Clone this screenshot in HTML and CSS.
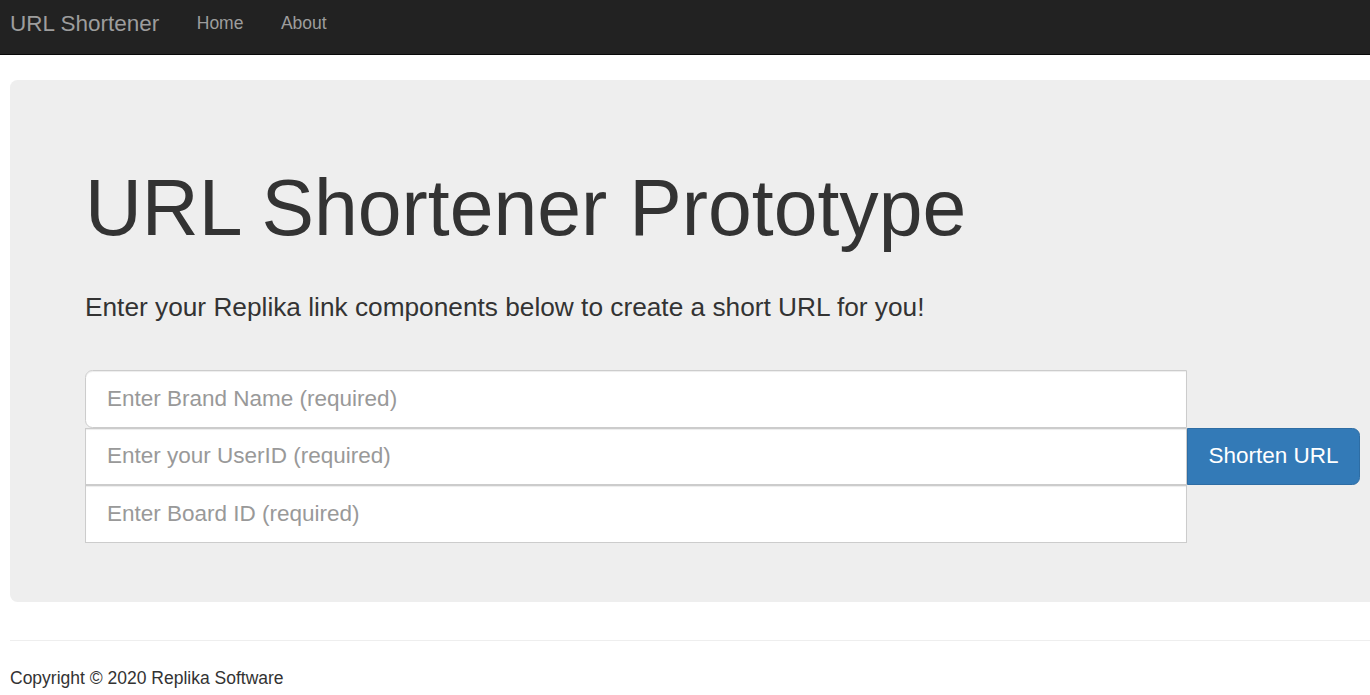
FILE: index.html
```html
<!DOCTYPE html>
<html lang="en">
<head>
<meta charset="utf-8">
<title>URL Shortener</title>
<link rel="stylesheet" href="styles.css">
</head>
<body>
<nav class="navbar">
  <a class="brand" href="#">URL Shortener</a>
  <ul class="nav">
    <li><a href="#">Home</a></li>
    <li><a href="#">About</a></li>
  </ul>
</nav>
<main class="page">
  <section class="jumbotron">
    <h1 class="title">URL Shortener Prototype</h1>
    <p class="lead">Enter your Replika link components below to create a short URL for you!</p>
    <form class="shorten-form">
      <div class="fields">
        <input class="field field-first" type="text" placeholder="Enter Brand Name (required)">
        <input class="field" type="text" placeholder="Enter your UserID (required)">
        <input class="field" type="text" placeholder="Enter Board ID (required)">
      </div>
      <button class="btn-primary" type="button">Shorten URL</button>
    </form>
  </section>
  <hr class="divider">
  <footer class="footer">
    <p class="copyright">Copyright © 2020 Replika Software</p>
  </footer>
</main>
</body>
</html>
```

FILE: styles.css
```css
html, body {
  margin: 0;
  padding: 0;
  overflow: hidden;
  background: #fff;
}

body {
  font-family: "Liberation Sans", Arial, Helvetica, sans-serif;
  font-size: 17.5px;
  line-height: 25px;
  color: #333;
}

.navbar {
  display: flex;
  align-items: flex-start;
  height: 54px;
  box-sizing: content-box;
  background: #222;
  border-bottom: 1px solid #080808;
  padding: 0 0 0 10px;
}

.brand {
  display: block;
  padding-top: 11px;
  padding-right: 18.75px;
  font-size: 22.5px;
  line-height: 25px;
  color: #9d9d9d;
  text-decoration: none;
}

.nav {
  display: flex;
  margin: 0;
  padding: 0;
  list-style: none;
}

.nav a {
  display: block;
  padding: 10.5px 18.75px 0;
  font-size: 17.5px;
  line-height: 25px;
  color: #9d9d9d;
  text-decoration: none;
}

.page {
  padding: 25px 0 0 10px;
  width: 1425px;
}

.jumbotron {
  background: #eee;
  border-radius: 7.5px;
  padding: 60px 75px 59.5px 75px;
}

.title {
  margin: 25px 0 37.5px;
  font-size: 78.75px;
  line-height: 1.1;
  font-weight: 500;
  color: #333;
}

.lead {
  margin: 0 0 43.5px;
  font-size: 26.25px;
  line-height: 37.5px;
  font-weight: 300;
}

.shorten-form {
  display: flex;
  align-items: center;
}

.fields {
  display: flex;
  flex-direction: column;
  flex: 0 0 1102px;
}

.field {
  box-sizing: border-box;
  display: block;
  width: 100%;
  height: 57.5px;
  margin: 0;
  padding: 12.5px 21px;
  font-family: "Liberation Sans", Arial, Helvetica, sans-serif;
  font-size: 22.5px;
  line-height: 30px;
  color: #555;
  background: #fff;
  border: 1px solid #ccc;
  border-radius: 0;
  box-shadow: inset 0 1px 1px rgba(0, 0, 0, 0.075);
  outline: none;
}

.field-first {
  border-radius: 7.5px 0 0 7.5px;
}

.field::placeholder {
  color: #999;
  opacity: 1;
}

.btn-primary {
  box-sizing: border-box;
  flex: 0 0 173px;
  height: 57.5px;
  padding: 12.5px 0;
  font-family: "Liberation Sans", Arial, Helvetica, sans-serif;
  font-size: 22.5px;
  line-height: 30px;
  text-align: center;
  color: #fff;
  background: #337ab7;
  border: 1px solid #2e6da4;
  border-radius: 0 7.5px 7.5px 0;
  white-space: nowrap;
  cursor: pointer;
}

.divider {
  margin: 38px 0 0;
  border: 0;
  border-top: 1px solid #eee;
  height: 0;
}

.footer {
  padding-top: 25px;
}

.copyright {
  margin: 0;
  font-size: 17.5px;
  line-height: 25px;
}
```
